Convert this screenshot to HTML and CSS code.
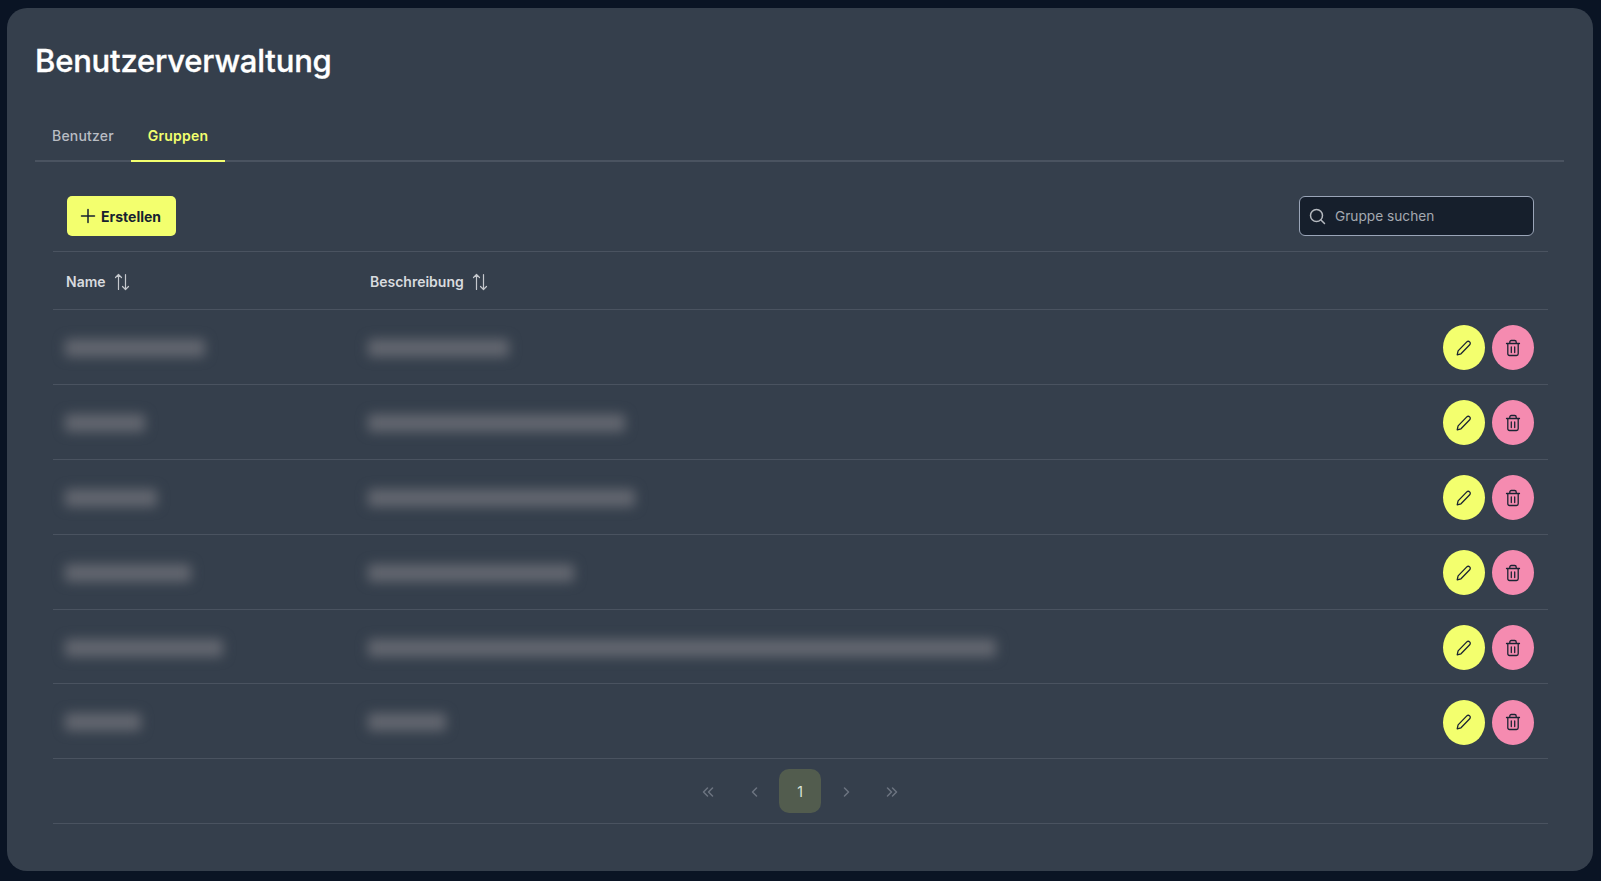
FILE: index.html
```html
<!DOCTYPE html>
<html lang="de">
<head>
    <meta charset="UTF-8">
    <title>Benutzerverwaltung</title>
    <link rel="stylesheet" href="styles.css">
</head>
<body>
    <svg class="sprites" width="0" height="0">
        <symbol id="i-edit" viewBox="0 0 18 18"><path d="M2.200 15.800l.9-3.900 8.700-9a1.900 1.900 0 0 1 2.900 2.800l-8.700 9.100-3.800 1z"/></symbol>
        <symbol id="i-trash" viewBox="0 0 18 18"><path d="M2.500 4.500h13M3.800 4.500v10.300a1.700 1.700 0 0 0 1.700 1.700h7a1.700 1.700 0 0 0 1.700-1.700V4.500M5.800 4.500V3a1.500 1.500 0 0 1 1.500-1.500h3.400A1.500 1.500 0 0 1 12.200 3v1.500M7.300 8v5.500M10.700 8v5.500"/></symbol>
        <symbol id="i-sort" viewBox="0 0 16 18"><path d="M4.500 16.500v-15M1.500 4.500l3-3 3 3M11.500 1.500v15M8.500 13.500l3 3 3-3"/></symbol>
    </svg>
    <main class="panel">
        <h1>Benutzerverwaltung</h1>
        <nav class="tabs">
            <a class="tab">Benutzer</a>
            <a class="tab active">Gruppen</a>
        </nav>
        <section class="content">
            <div class="toolbar">
                <button class="btn-create">
                    <svg class="icon" width="16" height="16" viewBox="0 0 16 16"><path d="M8 1.500v13M1.500 8h13"/></svg>
                    Erstellen
                </button>
                <label class="search">
                    <svg class="icon" width="17" height="17" viewBox="0 0 17 17"><circle cx="7.500" cy="7.500" r="6"/><path d="M12 12l3.500 3.500"/></svg>
                    <input type="text" placeholder="Gruppe suchen">
                </label>
            </div>
            <table class="groups">
                <thead>
                    <tr>
                        <th class="col-name">Name <svg class="icon sort"><use href="#i-sort"/></svg></th>
                        <th>Beschreibung <svg class="icon sort"><use href="#i-sort"/></svg></th>
                        <th class="col-actions"></th>
                    </tr>
                </thead>
                <tbody>
                    <tr>
                        <td><span class="redacted n1"></span></td>
                        <td><span class="redacted d1"></span></td>
                        <td class="actions">
                            <button class="round edit"><svg class="icon"><use href="#i-edit"/></svg></button>
                            <button class="round del"><svg class="icon"><use href="#i-trash"/></svg></button>
                        </td>
                    </tr>
                    <tr>
                        <td><span class="redacted n2"></span></td>
                        <td><span class="redacted d2"></span></td>
                        <td class="actions">
                            <button class="round edit"><svg class="icon"><use href="#i-edit"/></svg></button>
                            <button class="round del"><svg class="icon"><use href="#i-trash"/></svg></button>
                        </td>
                    </tr>
                    <tr>
                        <td><span class="redacted n3"></span></td>
                        <td><span class="redacted d3"></span></td>
                        <td class="actions">
                            <button class="round edit"><svg class="icon"><use href="#i-edit"/></svg></button>
                            <button class="round del"><svg class="icon"><use href="#i-trash"/></svg></button>
                        </td>
                    </tr>
                    <tr>
                        <td><span class="redacted n4"></span></td>
                        <td><span class="redacted d4"></span></td>
                        <td class="actions">
                            <button class="round edit"><svg class="icon"><use href="#i-edit"/></svg></button>
                            <button class="round del"><svg class="icon"><use href="#i-trash"/></svg></button>
                        </td>
                    </tr>
                    <tr>
                        <td><span class="redacted n5"></span></td>
                        <td><span class="redacted d5"></span></td>
                        <td class="actions">
                            <button class="round edit"><svg class="icon"><use href="#i-edit"/></svg></button>
                            <button class="round del"><svg class="icon"><use href="#i-trash"/></svg></button>
                        </td>
                    </tr>
                    <tr>
                        <td><span class="redacted n6"></span></td>
                        <td><span class="redacted d6"></span></td>
                        <td class="actions">
                            <button class="round edit"><svg class="icon"><use href="#i-edit"/></svg></button>
                            <button class="round del"><svg class="icon"><use href="#i-trash"/></svg></button>
                        </td>
                    </tr>
                </tbody>
            </table>
            <div class="pager">
                <button class="page-btn"><svg class="icon" width="12" height="10" viewBox="0 0 12 10"><path d="M5.500 1l-4 4 4 4M10.500 1l-4 4 4 4"/></svg></button>
                <button class="page-btn"><svg class="icon" width="7" height="10" viewBox="0 0 7 10"><path d="M5.500 1l-4 4 4 4"/></svg></button>
                <button class="page-btn current">1</button>
                <button class="page-btn"><svg class="icon" width="7" height="10" viewBox="0 0 7 10"><path d="M1.500 1l4 4-4 4"/></svg></button>
                <button class="page-btn"><svg class="icon" width="12" height="10" viewBox="0 0 12 10"><path d="M1.500 1l4 4-4 4M6.500 1l4 4-4 4"/></svg></button>
            </div>
        </section>
    </main>
</body>
</html>
```

FILE: styles.css
```css
* {
    box-sizing: border-box;
}
html, body {
    height: 100%;
}
body {
    margin: 0;
    padding: 8px 8px 10px 7px;
    background-color: #0a1424;
    font-family: Inter, "Noto Sans", sans-serif;
    overflow: hidden;
}
.sprites {
    display: block;
    height: 0;
}
.icon {
    fill: none;
    stroke: currentColor;
    stroke-width: 1.5;
    stroke-linecap: round;
    stroke-linejoin: round;
}
.panel {
    height: 100%;
    padding: 29px 29px 0 28px;
    background-color: #353f4c;
    border-radius: 20px;
}
h1 {
    margin: 0;
    height: 48px;
    color: #fff;
    font-size: 31px;
    font-weight: 500;
    line-height: 48px;
    letter-spacing: -0.2px;
    -webkit-text-stroke: 0.35px #fff;
}
.tabs {
    display: flex;
    margin-top: 30px;
    border-bottom: 2px solid #4a5360;
}
.tab {
    height: 47px;
    margin-bottom: -2px;
    padding: 0 17px;
    color: #b9bdc4;
    font-size: 14px;
    font-weight: 500;
    line-height: 41px;
    letter-spacing: 0.2px;
    border-bottom: 2px solid transparent;
}
.tab.active {
    color: #f3ff6e;
    font-weight: 600;
    border-bottom-color: #f3ff6e;
}
.content {
    padding: 0 16px 0 18px;
}
.toolbar {
    display: flex;
    justify-content: space-between;
    align-items: center;
    height: 89px;
    padding: 34px 14px 15px 14px;
}
.btn-create {
    display: flex;
    align-items: center;
    gap: 5px;
    height: 40px;
    width: 109px;
    padding: 0 0 0 13px;
    border: none;
    border-radius: 5px;
    background-color: #f3ff6e;
    color: #162130;
    font-family: inherit;
    font-size: 14px;
    font-weight: 650;
}
.search {
    display: flex;
    align-items: center;
    gap: 9px;
    width: 235px;
    height: 40px;
    padding: 0 9px;
    background-color: #161f2c;
    border: 1px solid #9aa5b8;
    border-radius: 6px;
    color: #b5b9bf;
}
.search input {
    flex: 1;
    min-width: 0;
    padding: 0;
    border: none;
    outline: none;
    background: transparent;
    color: #b5b9bf;
    font-family: inherit;
    font-size: 13.7px;
}
.search input::placeholder {
    color: #a4a9b1;
    opacity: 1;
}
.groups {
    width: 100%;
    border-collapse: collapse;
    table-layout: fixed;
    border-top: 1px solid #4a5360;
}
.groups th {
    height: 58px;
    padding: 2px 14px 0;
    color: #d8dbdf;
    font-size: 14px;
    font-weight: 600;
    text-align: left;
    white-space: nowrap;
    border-bottom: 1px solid #4a5360;
}
.groups th.col-name {
    width: 303px;
    padding-left: 13px;
}
.col-actions {
    width: 160px;
}
.sort {
    width: 16px;
    height: 18px;
    margin-left: 5px;
    vertical-align: -4px;
    stroke-width: 1.2;
    color: #c5c8cd;
}
.groups td {
    height: 74.9px;
    padding: 2px 14px 0;
    border-bottom: 1px solid #4a5360;
}
.redacted {
    display: block;
    height: 18px;
    margin-left: -2px;
    background-color: #62666f;
    border-radius: 3px;
    filter: blur(6px);
}
.n1 { width: 140px; }
.n2 { width: 80px; }
.n3 { width: 92px; }
.n4 { width: 126px; }
.n5 { width: 158px; }
.n6 { width: 76px; }
.d1 { width: 141px; }
.d2 { width: 257px; }
.d3 { width: 267px; }
.d4 { width: 206px; }
.d5 { width: 628px; }
.d6 { width: 78px; }
.actions {
    text-align: right;
    white-space: nowrap;
}
.round {
    width: 42px;
    height: 45px;
    padding: 0;
    border: none;
    border-radius: 50%;
    color: #1b2433;
    vertical-align: middle;
}
.round .icon {
    display: block;
    width: 18px;
    height: 18px;
    margin: 0 auto;
    stroke-width: 1.3;
}
.round + .round {
    margin-left: 3px;
}
.edit {
    background-color: #f3ff6e;
}
.del {
    background-color: #f58bb0;
}
.pager {
    display: flex;
    justify-content: center;
    gap: 4px;
    height: 65px;
    padding: 10px 1px 10px 0;
    border-bottom: 1px solid #4a5360;
}
.page-btn {
    width: 42px;
    height: 44px;
    padding: 0;
    border: none;
    border-radius: 10px;
    background: transparent;
    color: #6c7480;
    font-family: inherit;
    font-size: 14px;
}
.page-btn.current {
    background-color: #525c4e;
    color: #d9e4dc;
}
```
